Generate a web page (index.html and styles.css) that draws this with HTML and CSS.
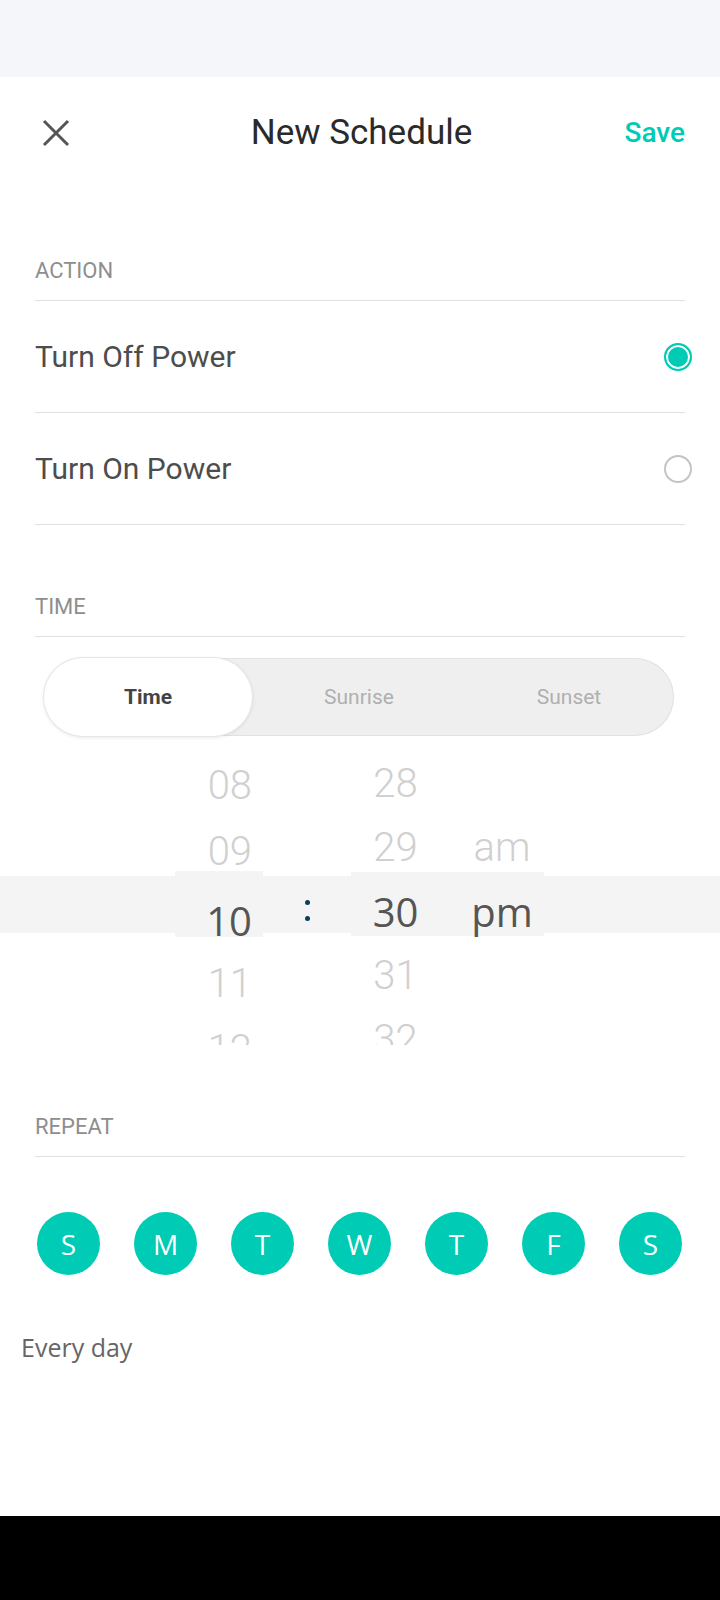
FILE: index.html
```html
<!DOCTYPE html>
<html lang="en">
<head>
  <meta charset="UTF-8">
  <meta name="viewport" content="width=device-width, initial-scale=1.0">
  <title>New Schedule</title>
  <link rel="stylesheet" href="styles.css">
</head>
<body>
  <div class="status-bar"></div>

  <main class="screen">
    <header class="top-bar">
      <button class="close-btn" aria-label="Close">
        <svg width="28" height="28" viewBox="0 0 28 28">
          <path d="M2 2 L26 26 M26 2 L2 26" stroke="#555" stroke-width="3" fill="none"/>
        </svg>
      </button>
      <h1 class="title">New Schedule</h1>
      <button class="save-btn">Save</button>
    </header>

    <section class="group">
      <h2 class="group-title">ACTION</h2>
      <div class="option">
        <span>Turn Off Power</span>
        <span class="radio checked"></span>
      </div>
      <div class="option">
        <span>Turn On Power</span>
        <span class="radio"></span>
      </div>
    </section>

    <section class="group">
      <h2 class="group-title">TIME</h2>
      <div class="segmented">
        <span class="seg active">Time</span>
        <span class="seg">Sunrise</span>
        <span class="seg">Sunset</span>
      </div>

      <div class="picker">
        <div class="wheel hours">
          <div class="cell">08</div>
          <div class="cell">09</div>
          <div class="cell selected">10</div>
          <div class="cell">11</div>
          <div class="cell">12</div>
        </div>
        <div class="colon"><i></i><i></i></div>
        <div class="wheel minutes">
          <div class="cell">28</div>
          <div class="cell">29</div>
          <div class="cell selected">30</div>
          <div class="cell">31</div>
          <div class="cell">32</div>
        </div>
        <div class="wheel ampm">
          <div class="cell"></div>
          <div class="cell">am</div>
          <div class="cell selected">pm</div>
          <div class="cell"></div>
        </div>
      </div>
    </section>

    <section class="group">
      <h2 class="group-title">REPEAT</h2>
      <div class="days">
        <span class="day">S</span>
        <span class="day">M</span>
        <span class="day">T</span>
        <span class="day">W</span>
        <span class="day">T</span>
        <span class="day">F</span>
        <span class="day">S</span>
      </div>
      <p class="repeat-note">Every day</p>
    </section>
  </main>

  <div class="nav-bar"></div>
</body>
</html>
```

FILE: styles.css
```css
html {
  box-sizing: border-box;
}
*, *::before, *::after {
  box-sizing: inherit;
}
body {
  margin: 0;
  width: 720px;
  height: 1600px;
  font-family: Roboto, "Liberation Sans", sans-serif;
  background: #fff;
  overflow: hidden;
}
.status-bar {
  height: 77px;
  background: #f5f6fa;
}
.nav-bar {
  height: 84px;
  background: #000;
}
.screen {
  height: 1439px;
  overflow: hidden;
  background: #fff;
}

/* header */
.top-bar {
  height: 112px;
  display: grid;
  grid-template-columns: 1fr auto 1fr;
  align-items: center;
  padding: 0 35px 0 42px;
}
.close-btn, .save-btn {
  border: none;
  background: none;
  padding: 0;
  cursor: pointer;
}
.close-btn {
  justify-self: start;
  width: 28px;
  height: 28px;
}
.close-btn svg {
  display: block;
}
.title {
  margin: 0 4px 0 0;
  font-size: 35px;
  font-weight: 400;
  color: #2a2a2a;
  line-height: 40px;
}
.save-btn {
  justify-self: end;
  font-family: Roboto, sans-serif;
  font-size: 28px;
  font-weight: 500;
  color: #00cbb4;
  line-height: 34px;
}

/* sections */
.group-title {
  margin: 0 35px;
  padding: 71px 0 18px;
  font-size: 22px;
  font-weight: 400;
  line-height: 22px;
  color: #8e8e8e;
  border-bottom: 1px solid #e0e0e0;
}
.option {
  margin: 0 35px;
  height: 112px;
  display: flex;
  align-items: center;
  justify-content: space-between;
  border-bottom: 1px solid #e0e0e0;
  font-size: 30px;
  color: #4d4d4d;
}
.radio {
  width: 28px;
  height: 28px;
  margin-right: -7px;
  border-radius: 50%;
  border: 2px solid #c4c4c4;
  background: #fff;
}
.radio.checked {
  border-color: #00cbb4;
  background: #00cbb4;
  box-shadow: inset 0 0 0 2px #fff;
}

/* time type switch */
.segmented {
  margin: 21px 46px 0 44px;
  height: 78px;
  display: grid;
  grid-template-columns: repeat(3, 1fr);
  background: #efefef;
  border-radius: 39px;
  box-shadow: inset 0 0 0 1px #e2e2e2;
}
.seg {
  display: flex;
  align-items: center;
  justify-content: center;
  font-size: 21px;
  color: #b0b0b0;
  border-radius: 39px;
}
.seg.active {
  width: 208px;
  background: #fff;
  color: #444;
  font-weight: 700;
  box-shadow: 0 0 0 1px #e6e6e6, 0 1px 4px rgba(0, 0, 0, 0.12);
}

/* wheel picker */
.picker {
  height: 309px;
  overflow: hidden;
  display: flex;
  padding-left: 175px;
  background: linear-gradient(to bottom, transparent 140px, #f4f4f4 140px, #f4f4f4 197px, transparent 197px);
}
.wheel {
  font-weight: 300;
  font-size: 40px;
  color: #d0d0d0;
}
.hours {
  width: 88px;
  margin-top: 3px;
  text-align: right;
}
.hours .cell {
  height: 66px;
  padding: 28px 11px 0 0;
  line-height: 38px;
}
.hours .cell.selected {
  padding-top: 31px;
}
.minutes {
  width: 89px;
  margin-top: 8px;
  text-align: center;
}
.ampm {
  width: 104px;
  margin-top: 8px;
  padding-left: 20px;
  text-align: center;
}
.minutes .cell, .ampm .cell {
  height: 64px;
  padding-top: 20px;
  line-height: 40px;
}
.cell.selected {
  background: #f4f4f4;
  font-family: "Open Sans", sans-serif;
  font-weight: 400;
  color: #555;
}
.ampm .cell.selected {
  margin-left: -20px;
  padding-left: 20px;
}
.colon {
  width: 88px;
  padding-top: 164px;
  display: flex;
  flex-direction: column;
  align-items: center;
  gap: 11px;
}
.colon i {
  width: 5px;
  height: 5px;
  border-radius: 50%;
  background: #0b3d5c;
}

/* repeat */
.days {
  margin: 55px 38px 0 37px;
  display: flex;
  justify-content: space-between;
}
.day {
  width: 63px;
  height: 63px;
  border-radius: 50%;
  background: #00cbb4;
  color: #fff;
  font-family: "Open Sans", sans-serif;
  font-size: 28px;
  display: flex;
  align-items: center;
  justify-content: center;
}
.repeat-note {
  margin: 57px 0 0 21px;
  font-family: "Open Sans", sans-serif;
  font-size: 25px;
  line-height: 30px;
  color: #666;
}
```
